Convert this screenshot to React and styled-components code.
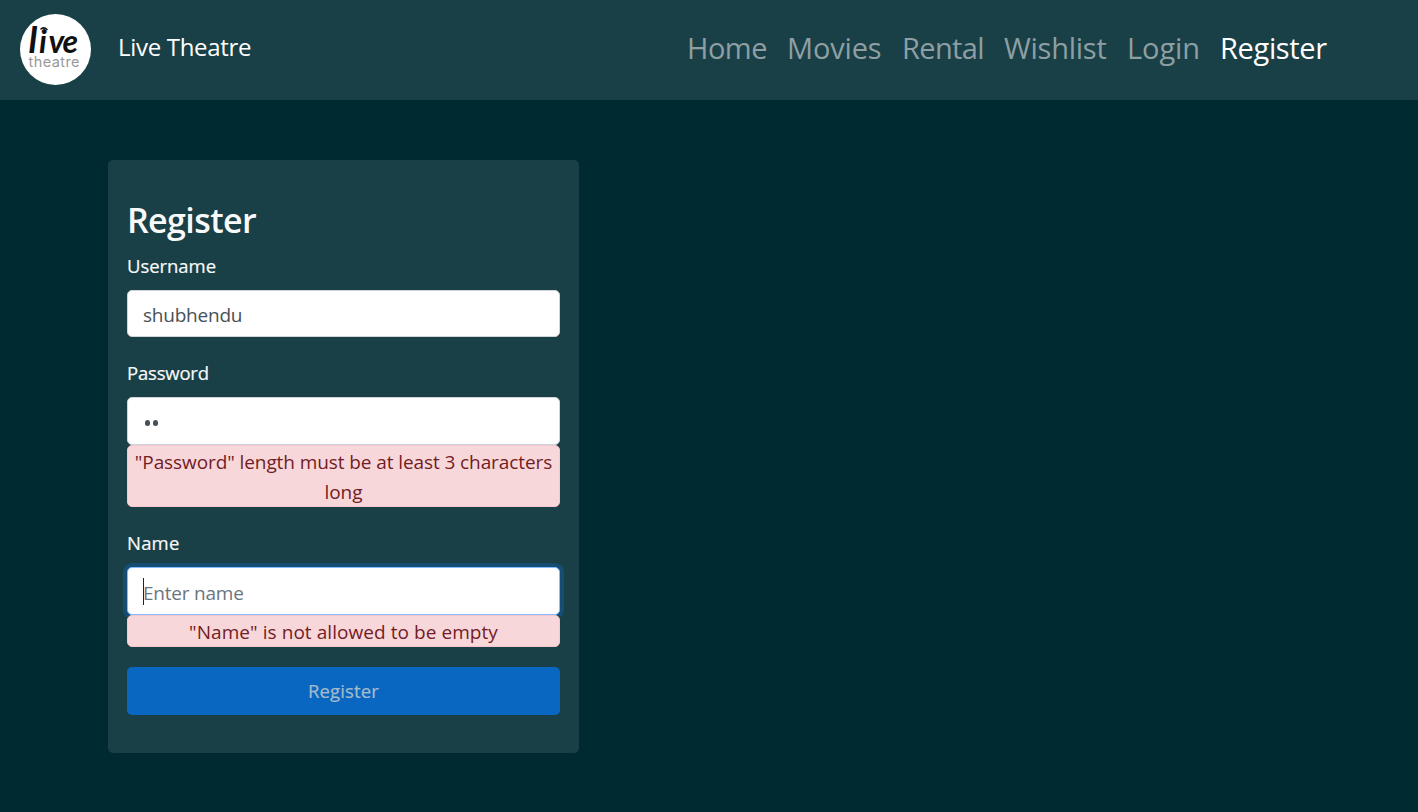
import React from "react";
import styled, { createGlobalStyle, css } from "styled-components";

const Global = createGlobalStyle`
  *, *::before, *::after { box-sizing: border-box; }
  body {
    margin: 0;
    background: #002a31;
    color: #f8f9fa;
    font-family: "Open Sans", "Noto Sans", sans-serif;
    font-size: 19px;
    line-height: 30px;
  }
`;

const Navbar = styled.nav`
  display: flex;
  align-items: flex-start;
  height: 100px;
  padding: 14px 91px 0 20px;
  background: #1a4047;
`;

const Logo = styled.svg`
  display: block;
  width: 71px;
  height: 71px;
`;

const Brand = styled.a`
  margin: 18px 0 0 27px;
  color: #fff;
  font-size: 24px;
  letter-spacing: ${(p) => p.$track}px;
`;

const NavLinks = styled.div`
  display: flex;
  gap: 20px;
  margin-left: auto;
  padding-top: 12px;
`;

const NavLink = styled.a`
  width: ${(p) => p.$width}px;
  white-space: nowrap;
  line-height: 44px;
  font-size: 29px;
  letter-spacing: ${(p) => p.$track}px;
  color: ${(p) => (p.$active ? "#fff" : "#8d9fa3")};
`;

const Card = styled.main`
  width: 471px;
  height: 593px;
  margin: 60px 0 0 108px;
  padding: 38px 19px;
  border-radius: 5px;
  background: #1a4047;
`;

const Title = styled.h2`
  margin: 0 0 8px;
  font-size: 34px;
  font-weight: 600;
  line-height: 45px;
  letter-spacing: ${(p) => p.$track}px;
`;

const Field = styled.div`
  margin-bottom: ${(p) => p.$gap || 20}px;
`;

const Label = styled.label`
  display: block;
  height: 30px;
  margin-bottom: 9px;
  font-size: 18.5px;
  -webkit-text-stroke: 0.2px currentColor;
  letter-spacing: ${(p) => p.$track}px;
`;

const Input = styled.div`
  display: flex;
  align-items: center;
  position: relative;
  height: ${(p) => p.$height}px;
  padding: 3px 15px 0;
  border: 1px solid #ced4da;
  border-radius: 5px;
  background: #fff;
  color: ${(p) => (p.$placeholder ? "#6c757d" : "#495057")};
  letter-spacing: ${(p) => p.$track || 0}px;
  ${(p) =>
    p.$focus &&
    css`
      border-color: #80bdff;
      box-shadow: 0 0 0 4px #154d73;
    `}
`;

const Caret = styled.i`
  width: 1px;
  height: 27px;
  margin: -3px -1px 0 0;
  background: #222;
`;

const Dots = styled.span`
  display: flex;
  gap: 2.5px;
  margin-top: 1px;
  padding-left: 1.5px;
`;

const Dot = styled.i`
  width: 5.5px;
  height: 5.5px;
  border-radius: 50%;
  background: #495057;
`;

const Alert = styled.div`
  position: relative;
  height: ${(p) => p.$height}px;
  padding-top: 1px;
  border: 1px solid #f5c6cb;
  border-radius: 5px;
  background: #f8d7da;
  color: #721c24;
  text-align: center;
  white-space: nowrap;
  letter-spacing: ${(p) => p.$track}px;
`;

const Submit = styled.button`
  display: block;
  width: 100%;
  height: 48px;
  padding: 0 0 1px;
  border: 0;
  border-radius: 5px;
  background: #0967c1;
  color: #a4bbcc;
  font: 400 18.5px "Open Sans", sans-serif;
  -webkit-text-stroke: 0.2px currentColor;
  letter-spacing: ${(p) => p.$track}px;
`;

const links = [
  ["Home", 80, -0.5],
  ["Movies", 95, -0.15],
  ["Rental", 82, -0.65],
  ["Wishlist", 103, -0.25],
  ["Login", 73, -0.1],
  ["Register", 107, -0.35],
];

function TheatreLogo() {
  return (
    <Logo viewBox="0 0 71 71">
      <circle cx="35.5" cy="35.5" r="35.5" fill="#fff" />
      <text y="38.5" fill="#111" fontFamily="Lato, sans-serif" fontStyle="italic" fontWeight="700" fontSize="32">
        <tspan x="8.5" fontSize="37">l</tspan>
        <tspan x="19">i</tspan>
        <tspan x="28.5">v</tspan>
        <tspan x="42.5">e</tspan>
      </text>
      <path d="M21 15q3-2.5 6 .5" fill="none" stroke="#111" strokeWidth="1.6" strokeLinecap="round" />
      <text x="8.5" y="53" fontFamily="Inter, sans-serif" fontSize="14.5" fill="#999" textLength="51">theatre</text>
    </Logo>
  );
}

export default function App() {
  return (
    <>
      <Global />
      <Navbar>
        <TheatreLogo />
        <Brand $track={-0.3}>Live Theatre</Brand>
        <NavLinks>
          {links.map(([name, width, track]) => (
            <NavLink key={name} $width={width} $track={track} $active={name === "Register"}>
              {name}
            </NavLink>
          ))}
        </NavLinks>
      </Navbar>
      <Card>
        <Title $track={-0.6}>Register</Title>
        <Field $gap={21}>
          <Label $track={-0.05}>Username</Label>
          <Input $height={47} $track={-0.22}>shubhendu</Input>
        </Field>
        <Field $gap={21}>
          <Label $track={-0.2}>Password</Label>
          <Input $height={48}>
            <Dots><Dot /><Dot /></Dots>
          </Input>
          <Alert $height={62} $track={-0.09}>
            "Password" length must be at least 3 characters<br />long
          </Alert>
        </Field>
        <Field>
          <Label $track={0.2}>Name</Label>
          <Input $height={48} $focus $placeholder $track={-0.22}><Caret />Enter name</Input>
          <Alert $height={32} $track={0.06}>"Name" is not allowed to be empty</Alert>
        </Field>
        <Submit $track={0.15}>Register</Submit>
      </Card>
    </>
  );
}
